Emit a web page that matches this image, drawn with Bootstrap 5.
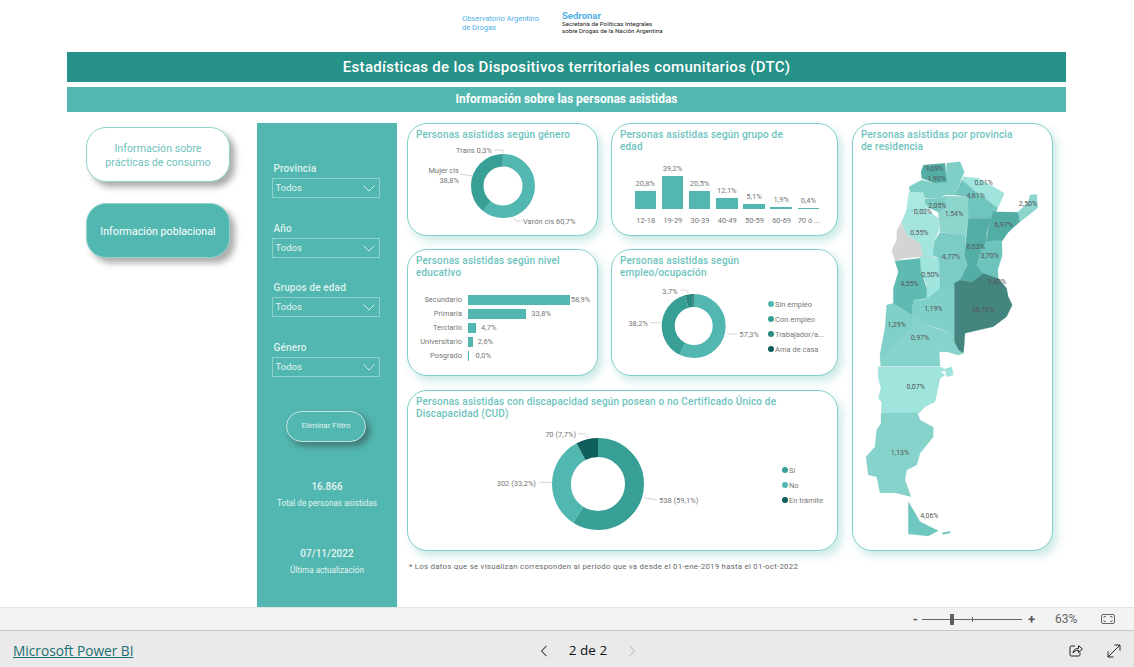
<!DOCTYPE html>
<html lang="es">
<head>
<meta charset="UTF-8">
<title>Estadísticas DTC</title>
<link href="https://cdn.jsdelivr.net/npm/bootstrap@5.3.0/dist/css/bootstrap.min.css" rel="stylesheet">
<style>
html, body { height: 100%; margin: 0; overflow: hidden; }
body { font-family: Roboto, "Liberation Sans", sans-serif; background: #fff; }
.report { height: 607px; padding: 0 68px 0 67px; }
.logos { height: 52px; padding-left: 395px; }
.logo-obs { width: 100px; padding-top: 14px; font-size: 7.5px; line-height: 9px; color: #4fb0e6; }
.logo-sed { padding-top: 10px; font-size: 6.2px; line-height: 7px; color: #222; }
.logo-sed b { display: block; font-size: 9.5px; line-height: 11px; font-weight: 700; color: #4fb0e6; }
.banner-main { height: 30px; line-height: 30px; background: #259188; color: #fff; font-size: 15px; font-weight: 500; letter-spacing: .31px; }
.banner-sub { height: 25px; line-height: 24px; margin-top: 5px; background: #52b7b0; color: #fff; font-size: 12px; font-weight: 700; }
.main-row { margin-top: 11px; height: 484px; }
.nav-col { width: 163px; padding: 3.5px 0 0 19px; flex: none; }
.nav-btn { width: 144px; height: 55px; border-radius: 20px; border: 1px solid #8fd3cd; font-size: 10.7px; line-height: 14px; padding: 4px 10px 0; box-shadow: 5px 5px 6px rgba(70,70,70,.45); }
.nav-btn.on { background: #52b7b0; color: #fff; margin-top: 21px; }
.nav-btn.off { background: #fff; color: #6fc3bd; }
.filter-panel { width: 140px; margin-left: 27px; flex: none; background: #52b7b0; padding: 39px 17px 0 14.5px; color: #e3f4f2; }
.slicer { margin-bottom: 23.5px; }
.slicer-label { font-size: 10px; line-height: 14px; font-weight: 500; padding-left: 2px; margin-bottom: 2px; color: #dcf1ef; letter-spacing: .15px; }
.slicer-box { height: 20px; border: 1.5px solid #8dd0cb; font-size: 9.5px; padding: 1px 4px 0 3px; }
.clear-btn { width: 80px; height: 31px; margin: 34px 0 0 14.5px; padding: 0; border-radius: 16px; border: 1px solid #c0e6e3; background: #52b7b0; color: #e3f4f2; font-size: 8px; box-shadow: 4px 4px 6px rgba(50,60,60,.5); }
.stat-num { font-size: 10px; line-height: 14px; font-weight: 500; }
.stat-text { font-size: 8.2px; line-height: 14px; margin-top: 2px; }
.stat-a { margin-top: 38px; }
.stat-b { margin-top: 37px; }
.stats { margin-left: -14.5px; margin-right: -17px; }
.mid-col { width: 431px; margin-left: 10px; flex: none; display: grid; grid-template-columns: 191px 227px; grid-template-rows: 113px 127px 162px auto; column-gap: 13px; row-gap: 13px; }
.chart-box { background: #fff; border: 1px solid #7fd0c9; border-radius: 20px; box-shadow: 4px 5px 8px rgba(82,183,176,.3); overflow: hidden; }
.chart-title { padding: 5px 8px 0 8px; font-size: 10px; line-height: 12px; color: #6cc3bd; font-weight: 500; letter-spacing: .19px; }
.wide { grid-column: 1 / 3; margin-top: 1px; }
.note { grid-column: 1 / 3; font-size: 7.8px; color: #666; padding-left: 2px; letter-spacing: .28px; margin-top: -3px; }
.map-box { width: 201px; margin-left: 14px; height: 428px; flex: none; }
svg { display: block; }
svg text { font-family: Roboto, "Liberation Sans", sans-serif; font-size: 7.5px; fill: #777; }
svg .map-labels text { font-size: 21px; fill: #555; }
.lead-line { fill: none; stroke: #c9c9c9; stroke-width: .8; }
.vbar-col { width: 27.2px; }
.vbar-num { font-size: 7.5px; line-height: 10px; color: #777; width: 27.2px; margin-left: -2.85px; margin-bottom: 2px; text-align: center; }
.vbar { width: 21.5px; background: #52b7b0; }
.vbar-cat { width: 27.2px; font-size: 7.5px; color: #777; text-align: center; line-height: 10px; white-space: nowrap; }
.hbars { padding-top: 11px; }
.hbar-row { height: 14px; }
.hbar-name { width: 54px; text-align: right; font-size: 7.5px; color: #777; flex: none; }
.hbar { height: 10.5px; margin-left: 6px; background: #52b7b0; flex: none; }
.hbar-num { font-size: 7.5px; color: #777; }
.legend-list { font-size: 7.5px; color: #777; line-height: 15px; }
.legend-dot { width: 6.5px; height: 6.5px; border-radius: 50%; margin-right: 1px; flex: none; }
.zoom-bar { height: 23px; background: #f3f3f3; border-top: 1px solid #e2e2e2; color: #666; padding-right: 19px; }
.zoom-sign { font-size: 13px; line-height: 13px; font-weight: 700; color: #555; }
.zoom-track { position: relative; width: 100px; height: 1px; background: #666; margin: 0 6px 0 4px; }
.zoom-thumb { position: absolute; left: 28px; top: -5px; width: 4px; height: 11px; background: #5f5f5f; }
.zoom-tick { position: absolute; left: 50px; top: -2px; width: 1px; height: 5px; background: #666; }
.zoom-pct { font-size: 12px; margin-left: 20px; width: 46px; }
.foot-bar { height: 37px; background: #eaeaea; border-top: 1px solid #c8c8c8; padding: 3px 13px 0 13px; }
.foot-link { width: 527px; flex: none; font-family: "Open Sans", sans-serif; font-size: 13.7px; color: #1a6f70; margin-top: 1px; }
.foot-link a { color: #1a6f70; }
.pager { width: 96px; font-family: "Open Sans", sans-serif; font-size: 13.5px; font-weight: 500; color: #111; flex: none; }
</style>
</head>
<body class="d-flex flex-column">
<div class="report flex-grow-0">
  <div class="logos d-flex">
    <div class="logo-obs">Observatorio Argentino<br>de Drogas</div>
    <div class="logo-sed"><b>Sedronar</b>Secretaría de Políticas Integrales<br>sobre Drogas de la Nación Argentina</div>
  </div>
  <div class="banner-main text-center">Estadísticas de los Dispositivos territoriales comunitarios (DTC)</div>
  <div class="banner-sub text-center">Información sobre las personas asistidas</div>

  <div class="main-row d-flex">
    <div class="nav-col">
      <button class="btn nav-btn off d-block">Información sobre prácticas de consumo</button>
      <button class="btn nav-btn on d-block">Información poblacional</button>
    </div>

    <div class="filter-panel">
      <div class="slicer">
        <div class="slicer-label">Provincia</div>
        <div class="slicer-box d-flex align-items-center justify-content-between">Todos<svg width="12" height="7" viewBox="0 0 12 7"><path d="M.5.5 6 6 11.500.5" fill="none" stroke="#cdeae8"/></svg></div>
      </div>
      <div class="slicer">
        <div class="slicer-label">Año</div>
        <div class="slicer-box d-flex align-items-center justify-content-between">Todos<svg width="12" height="7" viewBox="0 0 12 7"><path d="M.5.5 6 6 11.500.5" fill="none" stroke="#cdeae8"/></svg></div>
      </div>
      <div class="slicer">
        <div class="slicer-label">Grupos de edad</div>
        <div class="slicer-box d-flex align-items-center justify-content-between">Todos<svg width="12" height="7" viewBox="0 0 12 7"><path d="M.5.5 6 6 11.500.5" fill="none" stroke="#cdeae8"/></svg></div>
      </div>
      <div class="slicer">
        <div class="slicer-label">Género</div>
        <div class="slicer-box d-flex align-items-center justify-content-between">Todos<svg width="12" height="7" viewBox="0 0 12 7"><path d="M.5.5 6 6 11.500.5" fill="none" stroke="#cdeae8"/></svg></div>
      </div>
      <button class="btn clear-btn d-block">Eliminar Filtro</button>
      <div class="stats text-center">
        <div class="stat-num stat-a">16.866</div>
        <div class="stat-text">Total de personas asistidas</div>
        <div class="stat-num stat-b">07/11/2022</div>
        <div class="stat-text">Última actualización</div>
      </div>
    </div>

    <div class="mid-col">
      <!-- genero -->
      <div class="chart-box">
        <div class="chart-title" style="height:20px">Personas asistidas según género</div>
        <svg width="189" height="91" viewBox="408 144 189 91">
          <g transform="rotate(-90 503 186)" fill="none" stroke-width="12.5">
            <circle cx="503" cy="186" r="25.750" pathLength="100" stroke="#52b7b0" stroke-dasharray="60.800 39.200"/>
            <circle cx="503" cy="186" r="25.750" pathLength="100" stroke="#389f97" stroke-dasharray="38.900 61.100" stroke-dashoffset="-60.800"/>
            <circle cx="503" cy="186" r="25.750" pathLength="100" stroke="#1d7d76" stroke-dasharray=".3 99.700" stroke-dashoffset="-99.700"/>
          </g>
          <path class="lead-line" d="M494 150h9v3M460 174l12 2M513 218l3 3h6"/>
          <text x="492" y="153" text-anchor="end">Trans 0,3%</text>
          <text x="459" y="173" text-anchor="end">Mujer cis</text>
          <text x="459" y="183" text-anchor="end">38,8%</text>
          <text x="523" y="224">Varón cis 60,7%</text>
        </svg>
      </div>

      <!-- edad -->
      <div class="chart-box">
        <div class="chart-title" style="height:32px">Personas asistidas según grupo de<br>edad</div>
        <div id="ageBars" class="d-flex align-items-end" style="height:52.700px;padding-left:22.500px"></div>
        <div class="d-flex" style="margin-top:7px;padding-left:20.100px">
          <div class="vbar-cat">12-18</div><div class="vbar-cat">19-29</div><div class="vbar-cat">30-39</div><div class="vbar-cat">40-49</div><div class="vbar-cat">50-59</div><div class="vbar-cat">60-69</div><div class="vbar-cat">70 ó ...</div>
        </div>
      </div>

      <!-- nivel educativo -->
      <div class="chart-box">
        <div class="chart-title" style="height:32px">Personas asistidas según nivel<br>educativo</div>
        <div id="eduBars" class="hbars"></div>
      </div>

      <!-- empleo -->
      <div class="chart-box">
        <div class="chart-title" style="height:32px">Personas asistidas según<br>empleo/ocupación</div>
        <div class="d-flex">
          <svg width="152" height="93" viewBox="612 282 152 93" class="flex-shrink-0">
            <g transform="rotate(-90 693.700 326)" fill="none" stroke-width="13">
              <circle cx="693.700" cy="326" r="25.500" pathLength="100" stroke="#52b7b0" stroke-dasharray="57.300 42.700"/>
              <circle cx="693.700" cy="326" r="25.500" pathLength="100" stroke="#389f97" stroke-dasharray="38.200 61.800" stroke-dashoffset="-57.300"/>
              <circle cx="693.700" cy="326" r="25.500" pathLength="100" stroke="#2a8a82" stroke-dasharray="3.700 96.300" stroke-dashoffset="-95.500"/>
              <circle cx="693.700" cy="326" r="25.500" pathLength="100" stroke="#0e5f5b" stroke-dasharray=".8 99.200" stroke-dashoffset="-99.200"/>
            </g>
            <path class="lead-line" d="M680.700 290h6l2 5M650 322.700h11.700M726.700 334h10.300"/>
            <text x="677.700" y="294" text-anchor="end">3,7%</text>
            <text x="648" y="326" text-anchor="end">38,2%</text>
            <text x="739.300" y="337">57,3%</text>
          </svg>
          <div class="legend-list align-self-start" style="margin:14.500px 0 0 3.500px">
            <div class="d-flex align-items-center"><span class="legend-dot" style="background:#52b7b0"></span>Sin empleo</div>
            <div class="d-flex align-items-center"><span class="legend-dot" style="background:#389f97"></span>Con empleo</div>
            <div class="d-flex align-items-center"><span class="legend-dot" style="background:#2a8a82"></span>Trabajador/a...</div>
            <div class="d-flex align-items-center"><span class="legend-dot" style="background:#0e5f5b"></span>Ama de casa</div>
          </div>
        </div>
      </div>

      <!-- discapacidad -->
      <div class="chart-box wide">
        <div class="chart-title" style="height:32px">Personas asistidas con discapacidad según posean o no Certificado Único de<br>Discapacidad (CUD)</div>
        <div class="d-flex">
          <svg width="372" height="127" viewBox="408 423 372 127" class="flex-shrink-0">
            <g transform="rotate(-90 598 484)" fill="none" stroke-width="19">
              <circle cx="598" cy="484" r="36.500" pathLength="100" stroke="#389f97" stroke-dasharray="59.100 40.900"/>
              <circle cx="598" cy="484" r="36.500" pathLength="100" stroke="#52b7b0" stroke-dasharray="33.200 66.800" stroke-dashoffset="-59.100"/>
              <circle cx="598" cy="484" r="36.500" pathLength="100" stroke="#0e5f5b" stroke-dasharray="7.700 92.300" stroke-dashoffset="-92.300"/>
            </g>
            <path class="lead-line" d="M578 433.700h7l2.700 4.300M539.300 482.300h13M644.300 497.700l12.400 2.300"/>
            <text x="576" y="437" text-anchor="end">70 (7,7%)</text>
            <text x="536" y="486" text-anchor="end">302 (33,2%)</text>
            <text x="659" y="503">538 (59,1%)</text>
          </svg>
          <div class="legend-list align-self-start" style="margin:39.500px 0 0 1.500px">
            <div class="d-flex align-items-center"><span class="legend-dot" style="background:#389f97"></span>Sí</div>
            <div class="d-flex align-items-center"><span class="legend-dot" style="background:#52b7b0"></span>No</div>
            <div class="d-flex align-items-center"><span class="legend-dot" style="background:#0e5f5b"></span>En trámite</div>
          </div>
        </div>
      </div>

      <div class="note">* Los datos que se visualizan corresponden al periodo que va desde el 01-ene-2019 hasta el 01-oct-2022</div>
    </div>

    <!-- mapa -->
    <div class="chart-box map-box">
      <div class="chart-title" style="height:31px">Personas asistidas por provincia<br>de residencia</div>
      <svg width="199" height="395" viewBox="24 120 597 1185">
        <g stroke="#4aa79f" stroke-opacity=".25" stroke-width="1.500" stroke-linejoin="round">
          <polygon fill="#7ed0c7" points="192,215 230,195 270,205 303,200 305,145 345,140 358,170 350,190 330,240 300,240 285,250 240,250 235,232 195,230"/>
          <polygon fill="#52ada5" points="235,150 300,145 305,200 270,205 230,190 228,170"/>
          <polygon fill="#a0e4de" points="355,185 400,190 478,235 458,280 420,250 385,225 350,200"/>
          <polygon fill="#70c6be" points="350,195 385,225 420,250 458,280 445,310 370,310 368,245 330,240"/>
          <polygon fill="#8cd6ce" points="302,243 368,245 370,310 362,362 285,350 280,292 300,280"/>
          <polygon fill="#7accc4" points="240,252 285,250 302,243 300,280 280,292 255,280 240,265"/>
          <polygon fill="#aae8e2" points="192,232 235,232 240,265 255,280 240,285 185,285"/>
          <polygon fill="#a5e5df" points="170,322 185,285 240,282 280,310 282,345 265,385 270,425 235,425 225,385 185,360"/>
          <polygon fill="#d4d4d4" stroke="none" points="170,322 185,360 225,385 235,425 180,430 150,438 140,405 155,375 155,345"/>
          <polygon fill="#7accc4" points="285,352 362,362 358,420 368,450 345,495 325,520 285,522 282,430 265,420 268,380"/>
          <polygon fill="#a0e4de" points="225,425 282,428 285,522 285,552 245,552 245,510 228,470"/>
          <polygon fill="#5fbab2" points="150,438 225,430 228,470 245,520 245,550 205,555 200,600 145,565 145,520 160,470"/>
          <polygon fill="#52ada5" points="370,310 440,310 425,350 425,378 405,415 395,450 415,475 380,500 345,495 368,450 358,420"/>
          <polygon fill="#52ada5" points="445,290 520,292 525,320 490,352 470,380 425,378 428,345"/>
          <polygon fill="#8cd6ce" points="520,290 550,262 555,240 575,238 578,278 545,305 525,320"/>
          <polygon fill="#6cc4bc" points="425,378 470,375 472,420 458,465 460,490 415,475 395,450 405,415"/>
          <polygon fill="#7fd0c8" points="205,555 245,552 285,522 328,505 328,660 280,640 235,625 200,600"/>
          <polygon fill="#7fd0c8" points="125,570 145,565 200,600 205,640 150,680 125,715 105,718 120,640"/>
          <polygon fill="#85d3cb" points="200,600 235,625 328,660 328,680 338,705 355,715 340,720 305,710 283,710 285,753 107,753 105,718 125,715 150,680 205,640"/>
          <polygon fill="#44857f" points="328,505 345,495 380,500 415,475 460,490 485,520 490,545 502,570 485,605 445,635 360,655 358,690 355,715 340,705 328,680"/>
          <polygon fill="#a0e4de" points="100,755 285,755 305,765 285,770 300,780 285,790 270,860 240,875 222,895 110,895 110,860 100,850 108,820 100,790"/>
          <polygon fill="#a0e4de" points="300,762 320,756 325,780 305,785"/>
          <polygon fill="#85d3cb" points="108,895 218,895 225,915 265,937 265,965 225,1015 215,1050 185,1065 180,1095 198,1145 150,1133 105,1133 95,1085 70,1080 63,1025 90,995 95,945 108,925"/>
          <polygon fill="#6fc8c0" points="190,1160 205,1185 225,1220 280,1247 250,1263 190,1257"/>
          <polygon fill="#6fc8c0" points="292,1253 316,1249 316,1253 294,1259"/>
        </g>
        <g text-anchor="middle" class="map-labels">
          <text x="268" y="167">9,09%</text><text x="275" y="197">1,90%</text><text x="416" y="210">0,01%</text>
          <text x="392" y="248">4,61%</text><text x="549" y="272">2,50%</text><text x="277" y="279">2,05%</text>
          <text x="234" y="296">0,02%</text><text x="327" y="302">1,54%</text><text x="476" y="336">6,97%</text>
          <text x="223" y="360">0,55%</text><text x="392" y="402">6,03%</text><text x="434" y="429">3,70%</text>
          <text x="318" y="431">4,77%</text><text x="256" y="485">0,50%</text><text x="456" y="506">2,42%</text>
          <text x="193" y="512">4,55%</text><text x="414" y="590">38,76%</text><text x="265" y="587">1,19%</text>
          <text x="155" y="635">1,29%</text><text x="225" y="674">0,97%</text><text x="212" y="821">0,07%</text>
          <text x="165" y="1020">1,13%</text><text x="253" y="1209">4,06%</text>
        </g>
      </svg>
    </div>
  </div>
</div>

<div class="zoom-bar d-flex align-items-center justify-content-end">
  <span class="zoom-sign">-</span>
  <div class="zoom-track"><div class="zoom-thumb"></div><div class="zoom-tick"></div></div>
  <span class="zoom-sign">+</span>
  <span class="zoom-pct">63%</span>
  <svg width="14" height="10" viewBox="0 0 14 10"><rect x=".5" y=".5" width="13" height="9" rx="1.500" fill="none" stroke="#666"/><path d="M3 4V2.500h2M11 4V2.500H9M3 6v1.500h2M11 6v1.500H9" fill="none" stroke="#666" stroke-width=".8"/></svg>
</div>

<div class="foot-bar d-flex align-items-center">
  <div class="foot-link"><a href="#">Microsoft Power BI</a></div>
  <div class="pager d-flex align-items-center justify-content-between">
    <svg width="8" height="12" viewBox="0 0 8 12"><path d="M6.500.8 1.500 6l5 5.200" fill="none" stroke="#555" stroke-width="1.100"/></svg>
    <span>2 de 2</span>
    <svg width="8" height="12" viewBox="0 0 8 12"><path d="M1.500.8 6.500 6l-5 5.200" fill="none" stroke="#c4c4c4" stroke-width="1.100"/></svg>
  </div>
  <div class="ms-auto d-flex align-items-center gap-4">
    <svg width="14" height="13" viewBox="0 0 14 13"><path d="M6 2H2.200C1.500 2 1 2.500 1 3.200v7.600c0 .7.500 1.200 1.200 1.200h7.600c.7 0 1.200-.5 1.200-1.200V8.500" fill="none" stroke="#222"/><path d="M4 9c.3-3 2.500-4.700 5.500-4.700V1.700L13.500 5 9.500 8.500V6.200C7.300 6.200 5.300 7 4 9z" fill="none" stroke="#222"/></svg>
    <svg width="14" height="14" viewBox="0 0 14 14"><path d="M1 13 13 1M7.500 1H13v5.500M1 7.500V13h5.500" fill="none" stroke="#222"/></svg>
  </div>
</div>

<script>
  let ageData = [["20,8%", 17.7], ["39,2%", 33], ["20,5%", 17.5], ["12,1%", 10.3], ["5,1%", 4.7], ["1,9%", 1.7], ["0,4%", .7]];
  let ageBars = document.getElementById("ageBars");
  for (let i = 0; i < ageData.length; i++) {
    let col = document.createElement("div");
    col.className = "vbar-col";
    col.innerHTML = `<div class="vbar-num">${ageData[i][0]}</div><div class="vbar" style="height:${ageData[i][1]}px"></div>`;
    ageBars.appendChild(col);
  }

  // the longest bar has no room left, its label sits right against it
  let eduData = [["Secundario", 101.7, "58,9%", 1], ["Primaria", 58.3, "33,8%", 5], ["Terciario", 8, "4,7%", 5], ["Universitario", 4.7, "2,6%", 5], ["Posgrado", .6, "0,0%", 7]];
  let eduBars = document.getElementById("eduBars");
  for (let i = 0; i < eduData.length; i++) {
    let row = document.createElement("div");
    row.className = "hbar-row d-flex align-items-center";
    row.innerHTML = `<div class="hbar-name">${eduData[i][0]}</div><div class="hbar" style="width:${eduData[i][1]}px"></div><div class="hbar-num" style="margin-left:${eduData[i][3]}px">${eduData[i][2]}</div>`;
    eduBars.appendChild(row);
  }
</script>
<script src="https://cdn.jsdelivr.net/npm/bootstrap@5.3.0/dist/js/bootstrap.bundle.min.js"></script>
</body>
</html>
